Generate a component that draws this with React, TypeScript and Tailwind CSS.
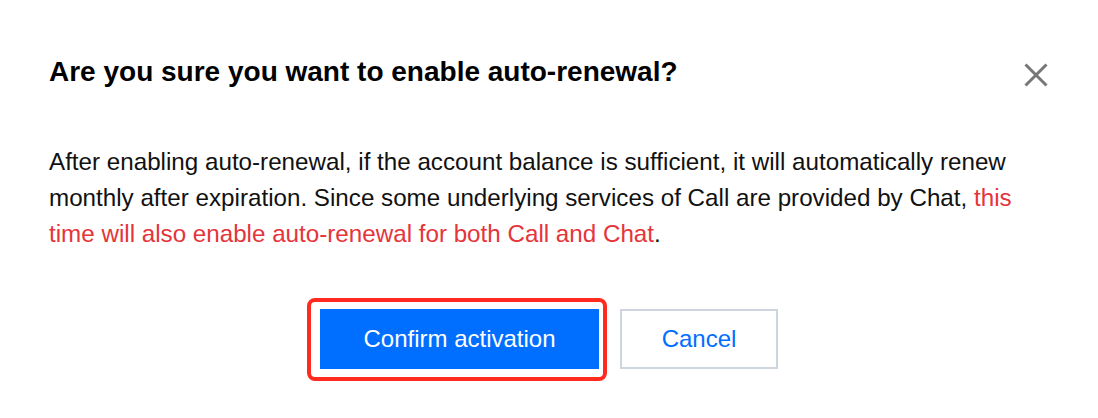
export default function App() {
  return (
    <div className="w-[1098px] h-[418px] bg-white font-['Liberation_Sans',Arial,sans-serif]">
      <div className="flex items-start justify-between pl-[49px] pr-[50px] pt-[56px]">
        <h2 className="text-[28px] leading-[32px] font-bold text-black">Are you sure you want to enable auto-renewal?</h2>
        <button className="mt-[7px] text-[#777777]">
          <svg width="24" height="24" viewBox="0 0 24 24" fill="none" stroke="currentColor" strokeWidth="3">
            <path d="M1.5 1.5L22.5 22.5M22.5 1.5L1.5 22.5" />
          </svg>
        </button>
      </div>
      <p className="mt-[56px] pl-[49px] pr-[78px] text-[24.2px] leading-[36px] text-[#111111]">
        After enabling auto-renewal, if the account balance is sufficient, it will automatically renew monthly after
        expiration. Since some underlying services of Call are provided by Chat,{" "}
        <span className="text-[#e5343a]">this time will also enable auto-renewal for both Call and Chat</span>.
      </p>
      <div className="flex justify-center gap-[21px] mt-[57px]">
        <div className="relative">
          <button className="w-[279px] h-[60px] bg-[#006eff] text-white text-[24px]">Confirm activation</button>
          <div className="absolute left-[-13px] right-[-8px] top-[-11px] bottom-[-12px] border-[4px] border-[#ff2a20] rounded-[8px] pointer-events-none" />
        </div>
        <button className="w-[158px] h-[60px] border-2 border-[#cfd5de] text-[#006eff] text-[24px] bg-white">Cancel</button>
      </div>
    </div>
  )
}
